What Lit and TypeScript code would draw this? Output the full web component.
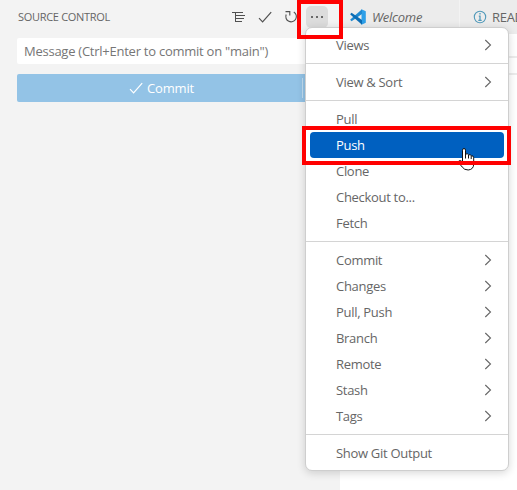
import { LitElement, html, css, svg, nothing } from "lit";
import { customElement } from "lit/decorators.js";

type Entry = { label: string; sub?: boolean; active?: boolean };

const groups: Entry[][] = [
  [{ label: "Views", sub: true }],
  [{ label: "View & Sort", sub: true }],
  [
    { label: "Pull" },
    { label: "Push", active: true },
    { label: "Clone" },
    { label: "Checkout to..." },
    { label: "Fetch" },
  ],
  [
    { label: "Commit", sub: true },
    { label: "Changes", sub: true },
    { label: "Pull, Push", sub: true },
    { label: "Branch", sub: true },
    { label: "Remote", sub: true },
    { label: "Stash", sub: true },
    { label: "Tags", sub: true },
  ],
  [{ label: "Show Git Output" }],
];

const check = svg`<path d="M2 9.200 5.600 12.800 14.200 3.200" fill="none" stroke="currentColor" stroke-width="1.200"/>`;

@customElement("scm-menu")
export class ScmMenu extends LitElement {
  static styles = css`
    :host {
      display: block;
      box-sizing: border-box;
      width: 204px;
      padding: 4px;
      border: 1px solid #cecece;
      border-radius: 7px;
      background: #fff;
      box-shadow: 0 2px 8px rgba(0, 0, 0, 0.16);
      color: #666;
    }
    .item {
      display: flex;
      align-items: center;
      justify-content: space-between;
      height: 26px;
      padding: 0 12px 0 26px;
      border-radius: 4px;
      white-space: nowrap;
    }
    .item.active {
      background: #0060c0;
      color: #fff;
    }
    .sep {
      height: 1px;
      margin: 5px -4px;
      background: #d4d4d4;
    }
    svg {
      width: 8px;
      height: 12px;
      margin-top: -1px;
    }
  `;
  render() {
    return groups.map(
      (g, i) => html`
        ${i ? html`<div class="sep"></div>` : nothing}
        ${g.map(
          (e) => html`<div class="item ${e.active ? "active" : ""}">
            <span>${e.label}</span>
            ${e.sub
              ? html`<svg viewBox="0 0 8 12"><path d="M1.300 1 6.500 6 1.300 11" fill="none" stroke="currentColor" stroke-width="1.100" /></svg>`
              : nothing}
          </div>`
        )}
      `
    );
  }
}

@customElement("app-root")
export class AppRoot extends LitElement {
  static styles = css`
    :host {
      display: block;
      position: relative;
      width: 517px;
      height: 490px;
      overflow: hidden;
      font: 13px/26px "Open Sans", "Noto Sans", sans-serif;
      letter-spacing: -0.3px;
      color: #666;
    }
    .shell {
      display: flex;
      height: 100%;
    }
    .side {
      box-sizing: border-box;
      width: 340px;
      background: #f3f3f3;
    }
    .head {
      display: flex;
      align-items: center;
      height: 34px;
      padding-left: 18px;
    }
    .title {
      width: 212px;
      font-size: 11px;
      letter-spacing: -0.3px;
      white-space: nowrap;
    }
    .tool {
      width: 16px;
      height: 16px;
      flex: none;
      margin-right: 11px;
    }
    .more {
      display: flex;
      align-items: center;
      justify-content: center;
      width: 22px;
      height: 22px;
      border-radius: 5px;
      background: #dcdcdc;
      margin-left: -5px;
    }
    .more svg {
      width: 16px;
      height: 16px;
    }
    .field {
      box-sizing: border-box;
      height: 26px;
      margin: 4px 0 0 17px;
      padding-left: 7px;
      border-radius: 2px;
      background: #fff;
      color: #767676;
      letter-spacing: -0.25px;
      white-space: nowrap;
    }
    .commit {
      display: flex;
      height: 28px;
      margin: 10px 0 0 17px;
      border-radius: 2px;
      background: #93c3e6;
      color: #fff;
    }
    .main-action {
      display: flex;
      align-items: center;
      justify-content: center;
      gap: 3px;
      width: 285px;
      padding-left: 3px;
      box-sizing: border-box;
      font-weight: 500;
      letter-spacing: -0.15px;
    }
    .main-action svg {
      width: 16px;
      height: 16px;
    }
    .split {
      width: 1px;
      margin: 4px 0;
      background: #c0dcf0;
    }
    .editor {
      flex: 1;
      min-width: 0;
      background: #fff;
    }
    .tabs {
      display: flex;
      height: 34px;
      background: #f3f3f3;
      overflow: hidden;
    }
    .tab {
      box-sizing: border-box;
      display: flex;
      align-items: center;
      flex: none;
      width: 119px;
      margin-right: 1px;
      padding-left: 10px;
      background: #ececec;
      white-space: nowrap;
    }
    .tab svg {
      width: 16px;
      height: 16px;
      margin-right: 6px;
    }
    .tab + .tab svg {
      margin: 0 4px 0 2px;
    }
    .preview {
      font-style: italic;
      letter-spacing: -0.25px;
    }
    .line {
      height: 2px;
      background: #ececec;
      margin-top: 22px;
    }
    .line + .line {
      margin-top: 15px;
    }
    scm-menu {
      position: absolute;
      left: 305px;
      top: 27px;
    }
    .mark {
      position: absolute;
      box-sizing: border-box;
      border: 4px solid #f00;
    }
    .mark-more {
      left: 297px;
      top: 0;
      width: 46px;
      height: 39px;
    }
    .mark-push {
      left: 302px;
      top: 126px;
      width: 209px;
      height: 39px;
    }
    .hand {
      position: absolute;
      left: 456px;
      top: 147px;
      width: 20px;
      height: 26px;
    }
  `;
  render() {
    return html`
      <div class="shell">
        <div class="side">
          <div class="head">
            <span class="title">SOURCE CONTROL</span>
            <svg class="tool" viewBox="0 0 16 16"><path d="M2 3.500h11M5 6.500h10M5 9.500h9M5 12.500h7M5.500 3v10" fill="none" stroke="#505050" /></svg>
            <svg class="tool" viewBox="0 0 16 16" color="#505050">${check}</svg>
            <svg class="tool" viewBox="0 0 16 16"><path d="M2.200 5.500A5.300 5.300 0 1 0 9.800 3M1.500 2.600h4.300v4" fill="none" stroke="#505050" stroke-width="1.100" /></svg>
            <div class="more">
              <svg viewBox="0 0 16 16" fill="#424242"><circle cx="3" cy="8" r="1" /><circle cx="8" cy="8" r="1" /><circle cx="13" cy="8" r="1" /></svg>
            </div>
          </div>
          <div class="field">Message (Ctrl+Enter to commit on "main")</div>
          <div class="commit">
            <div class="main-action"><svg viewBox="0 0 16 16">${check}</svg><span>Commit</span></div>
            <div class="split"></div>
          </div>
        </div>
        <div class="editor">
          <div class="tabs">
            <div class="tab preview">
              <svg viewBox="0 0 16 16"><path d="M11.500.300 15.800 2.300v11.400l-4.300 2z" fill="#2d9fe8" /><path d="M12 .300V5L1.600 12.200.300 11.100V10.400z" fill="#1f8ad2" /><path d="M12 15.700V11L1.600 3.800.300 4.900V5.600z" fill="#0b6db5" /></svg>
              <span>Welcome</span>
            </div>
            <div class="tab">
              <svg viewBox="0 0 16 16"><circle cx="8" cy="8" r="5.700" fill="none" stroke="#519aba" stroke-width="1.100" /><path d="M8 4v1.600M6.800 7.200H8v4M6.300 11.300h3.400" fill="none" stroke="#519aba" stroke-width="1.300" /></svg>
              <span>README.md</span>
            </div>
          </div>
          <div class="line"></div>
          <div class="line"></div>
        </div>
      </div>
      <scm-menu></scm-menu>
      <svg class="hand" viewBox="0 0 20 26"><path d="M6.500 15V3.200q0-1.700 1.500-1.700t1.500 1.700V7q2.500-.6 3 .8 2-.5 2.700.9 2.500-.2 2.500 2V17q0 5.500-5.500 6-4 0-6-3L2.500 15.500Q2 13.500 4.500 13.500z" fill="#fff" stroke="#111" /><path d="M9.500 7v4.500M12.500 8v3.500M15.200 9v3" stroke="#111" fill="none" /></svg>
      <div class="mark mark-more"></div>
      <div class="mark mark-push"></div>
    `;
  }
}
